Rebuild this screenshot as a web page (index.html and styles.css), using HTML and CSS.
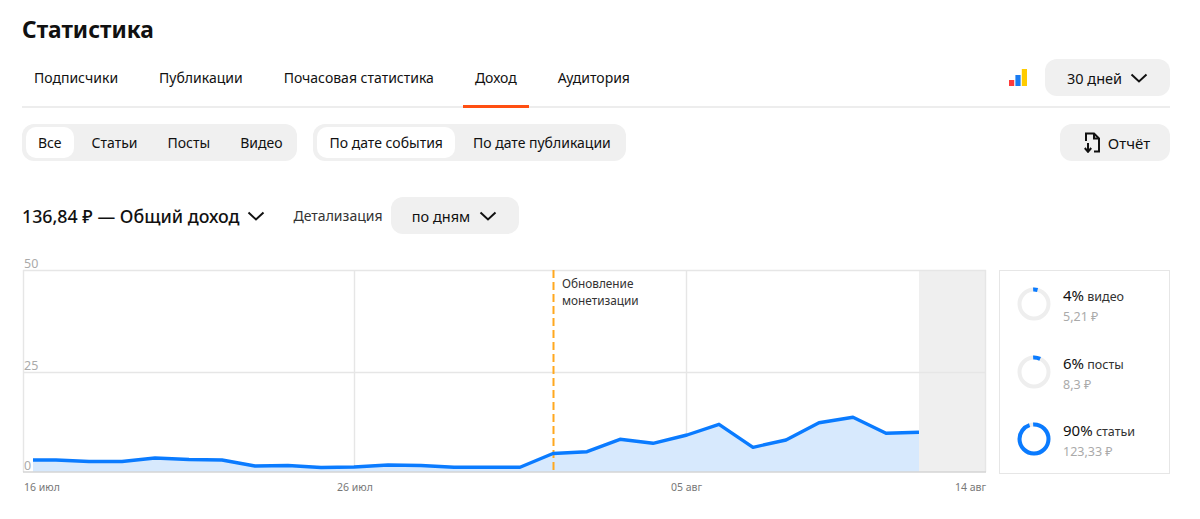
FILE: index.html
```html
<!DOCTYPE html>
<html lang="en">

<head>
    <meta charset="UTF-8">
    <meta name="viewport" content="width=device-width, initial-scale=1.0">
    <title>Статистика</title>
    <link rel="stylesheet" href="styles.css">
</head>

<body>
    <div class="page">
        <h1 class="title">Статистика</h1>

        <div class="tabsRow">
            <div class="tabs">
                <a class="tab">Подписчики</a>
                <a class="tab">Публикации</a>
                <a class="tab">Почасовая статистика</a>
                <a class="tab active">Доход</a>
                <a class="tab">Аудитория</a>
            </div>
            <div class="tabsRight">
                <svg class="barsIcon" width="18" height="17" viewBox="0 0 18 17">
                    <rect x="0" y="11" width="5.2" height="6" fill="#ff3b3b" />
                    <rect x="6.4" y="6" width="5.2" height="11" fill="#1a7cf2" />
                    <rect x="12.8" y="0" width="5.2" height="17" fill="#ffcc00" />
                </svg>
                <button class="pillBtn periodBtn">30 дней
                    <svg class="chevron" width="18" height="10" viewBox="0 0 18 10">
                        <path d="M1.5 1.5 L9 8.5 L16.5 1.5" />
                    </svg>
                </button>
            </div>
        </div>

        <div class="filtersRow">
            <div class="segment">
                <span class="segItem selected">Все</span>
                <span class="segItem">Статьи</span>
                <span class="segItem">Посты</span>
                <span class="segItem">Видео</span>
            </div>
            <div class="segment">
                <span class="segItem selected">По дате события</span>
                <span class="segItem">По дате публикации</span>
            </div>
            <button class="pillBtn reportBtn">
                <svg width="16" height="21" viewBox="0 0 16 21" fill="none" stroke="#111" stroke-width="2">
                    <path d="M2 9 V1.5 H10 L15 6.5 V19.5 H10" />
                    <path d="M10 1.5 V6.5 H15" />
                    <path d="M4 11 V19.5 M0.8 16 L4 19.8 L7.2 16" />
                </svg>
                Отчёт
            </button>
        </div>

        <div class="totalRow">
            <span class="total">136,84 ₽ — Общий доход</span>
            <svg class="chevron" width="18" height="10" viewBox="0 0 18 10">
                <path d="M1.5 1.5 L9 8.5 L16.5 1.5" />
            </svg>
            <span class="detailLabel">Детализация</span>
            <button class="pillBtn detailBtn">по дням
                <svg class="chevron" width="18" height="10" viewBox="0 0 18 10">
                    <path d="M1.5 1.5 L9 8.5 L16.5 1.5" />
                </svg>
            </button>
        </div>

        <div class="chartRow">
            <!-- viewBox keeps the same numbers as the page so points are easy to read -->
            <svg class="chart" width="966" height="240" viewBox="22 255 966 240">
                <rect x="919" y="270" width="67" height="202" fill="#efefef" />
                <path class="grid" d="M23 270.5 H986 M23 372.5 H986 M354.5 270 V472 M686.5 270 V472 M23.5 270 V472 M985.5 270 V472" />
                <path class="area"
                    d="M33 472 L33 460 L56 460 L89 461.5 L122 461.5 L155 458 L189 459.5 L222 460 L255 466 L288 465.5 L321 467.5 L354 467 L388 465 L421 465.5 L454 467.3 L487 467.3 L520 467.3 L553 453.5 L587 451.7 L620 439.3 L653 443.3 L687 435 L719 424.3 L753 447.3 L786 440 L819 422.7 L853 417.3 L886 433.3 L919 432.3 L919 472 Z" />
                <path class="axis" d="M23 472 H986" />
                <path class="marker" d="M553.5 270 V472" />
                <path class="line"
                    d="M33 460 L56 460 L89 461.5 L122 461.5 L155 458 L189 459.5 L222 460 L255 466 L288 465.5 L321 467.5 L354 467 L388 465 L421 465.5 L454 467.3 L487 467.3 L520 467.3 L553 453.5 L587 451.7 L620 439.3 L653 443.3 L687 435 L719 424.3 L753 447.3 L786 440 L819 422.7 L853 417.3 L886 433.3 L919 432.3" />
                <text class="yLabel" x="24" y="268">50</text>
                <text class="yLabel" x="24" y="370">25</text>
                <text class="yLabel" x="24" y="470">0</text>
                <text class="xLabel" x="24" y="491">16 июл</text>
                <text class="xLabel" x="337" y="491">26 июл</text>
                <text class="xLabel" x="671" y="491">05 авг</text>
                <text class="xLabel" x="955" y="491">14 авг</text>
                <text class="note" x="562" y="288">Обновление</text>
                <text class="note" x="562" y="305">монетизации</text>
            </svg>

            <div class="shares">
                <div class="share">
                    <svg class="donut" width="36" height="36" viewBox="0 0 36 36">
                        <circle class="donutBg" cx="18" cy="18" r="14.5" />
                        <circle class="donutVal" cx="18" cy="18" r="14.5" pathLength="100" stroke-dasharray="5 95" stroke-dashoffset="1" />
                    </svg>
                    <div>
                        <div class="shareName"><span class="sharePct">4%</span> видео</div>
                        <div class="shareSum">5,21 ₽</div>
                    </div>
                </div>
                <div class="share">
                    <svg class="donut" width="36" height="36" viewBox="0 0 36 36">
                        <circle class="donutBg" cx="18" cy="18" r="14.5" />
                        <circle class="donutVal" cx="18" cy="18" r="14.5" pathLength="100" stroke-dasharray="8 92" stroke-dashoffset="1" />
                    </svg>
                    <div>
                        <div class="shareName"><span class="sharePct">6%</span> посты</div>
                        <div class="shareSum">8,3 ₽</div>
                    </div>
                </div>
                <div class="share">
                    <svg class="donut" width="36" height="36" viewBox="0 0 36 36">
                        <circle class="donutBg" cx="18" cy="18" r="14.5" />
                        <circle class="donutVal" cx="18" cy="18" r="14.5" pathLength="100" stroke-dasharray="96 4" stroke-dashoffset="1" />
                    </svg>
                    <div>
                        <div class="shareName"><span class="sharePct">90%</span> статьи</div>
                        <div class="shareSum">123,33 ₽</div>
                    </div>
                </div>
            </div>
        </div>
    </div>
</body>

</html>
```
FILE: styles.css
```css
body {
    font-family: "Noto Sans", Arial, sans-serif;
    margin: 0;
    background-color: #ffffff;
    color: #111111;
}

.page {
    width: 1148px;
    margin-left: 22px;
}

.title {
    margin: 0;
    padding-top: 15px;
    font-size: 22.7px;
    line-height: 30px;
    font-weight: 700;
}

.tabsRow {
    display: flex;
    justify-content: space-between;
    align-items: center;
    height: 47px;
    margin-top: 14px;
    border-bottom: 2px solid #ededed;
}

.tabs {
    display: flex;
    gap: 17px;
    height: 47px;
}

.tab {
    padding: 7px 12px 0;
    font-size: 14px;
    line-height: 24px;
    margin-bottom: -2px;
}

.tab.active {
    border-bottom: 3px solid #ff4f12;
}

.tabsRight {
    display: flex;
    align-items: center;
    gap: 18px;
    margin-top: -10px;
}

.pillBtn {
    display: flex;
    align-items: center;
    justify-content: center;
    height: 37px;
    padding: 0;
    border: none;
    border-radius: 12px;
    background-color: #f0f0f0;
    color: #111111;
    font-family: inherit;
    font-size: 14.5px;
}

.periodBtn {
    width: 125px;
    gap: 8px;
}

.chevron {
    fill: none;
    stroke: #111111;
    stroke-width: 2;
}

.filtersRow {
    display: flex;
    align-items: center;
    gap: 16px;
    margin-top: 16px;
}

.segment {
    display: flex;
    height: 37px;
    padding: 3px 3px 3px 4px;
    box-sizing: border-box;
    background-color: #f0f0f0;
    border-radius: 12px;
}

.segItem {
    padding: 0 12px;
    border-radius: 10px;
    font-size: 14px;
    line-height: 31px;
    margin-right: 6px;
}

.segItem:last-child {
    margin-right: 0;
}

.segItem.selected {
    background-color: #ffffff;
}

.reportBtn {
    box-sizing: border-box;
    width: 110px;
    gap: 8px;
    padding-left: 4px;
    margin-left: auto;
    font-size: 15px;
}

.totalRow {
    display: flex;
    align-items: center;
    height: 37px;
    margin-top: 36px;
}

.total {
    font-size: 17.8px;
    font-weight: 500;
}

.totalRow > .chevron {
    margin-left: 7px;
}

.detailLabel {
    margin-left: 29px;
    font-size: 14px;
    color: #333333;
}

.detailBtn {
    width: 128px;
    gap: 9px;
    margin-left: 8px;
}

.chartRow {
    display: flex;
    align-items: flex-start;
    margin-top: 21px;
}

.chart {
    display: block;
    flex: none;
}

.grid {
    fill: none;
    stroke: #e6e6e6;
    stroke-width: 1.4;
}

.axis {
    fill: none;
    stroke: #d5d5d5;
    stroke-width: 1.4;
}

.area {
    fill: #d7e9fd;
}

.line {
    fill: none;
    stroke: #0a7bff;
    stroke-width: 3.4;
    stroke-linejoin: round;
}

.marker {
    fill: none;
    stroke: #ffa81f;
    stroke-width: 2;
    stroke-dasharray: 8 4;
}

.yLabel,
.xLabel {
    font-size: 10.5px;
    fill: #777777;
}

.yLabel {
    font-size: 12.5px;
    fill: #aaaaaa;
}

.note {
    font-size: 11.8px;
    fill: #333333;
}

.shares {
    box-sizing: border-box;
    width: 171px;
    height: 204px;
    margin-top: 15px;
    margin-left: 11px;
    padding: 15px 0 0 16px;
    border: 1px solid #e6e6e6;
    display: flex;
    flex-direction: column;
    gap: 31.5px;
}

.share {
    display: flex;
    align-items: flex-start;
    gap: 11px;
    height: 36px;
}

.donut {
    flex: none;
    transform: rotate(-90deg);
}

.donutBg,
.donutVal {
    fill: none;
    stroke-width: 4;
}

.donutBg {
    stroke: #eeeeee;
}

.donutVal {
    stroke: #0a7bff;
}

.shareName {
    font-size: 12.5px;
    line-height: 18px;
    color: #333333;
}

.sharePct {
    font-size: 15px;
    color: #111111;
}

.shareSum {
    margin-top: 3px;
    font-size: 12.5px;
    line-height: 16px;
    color: #aaaaaa;
}
```
